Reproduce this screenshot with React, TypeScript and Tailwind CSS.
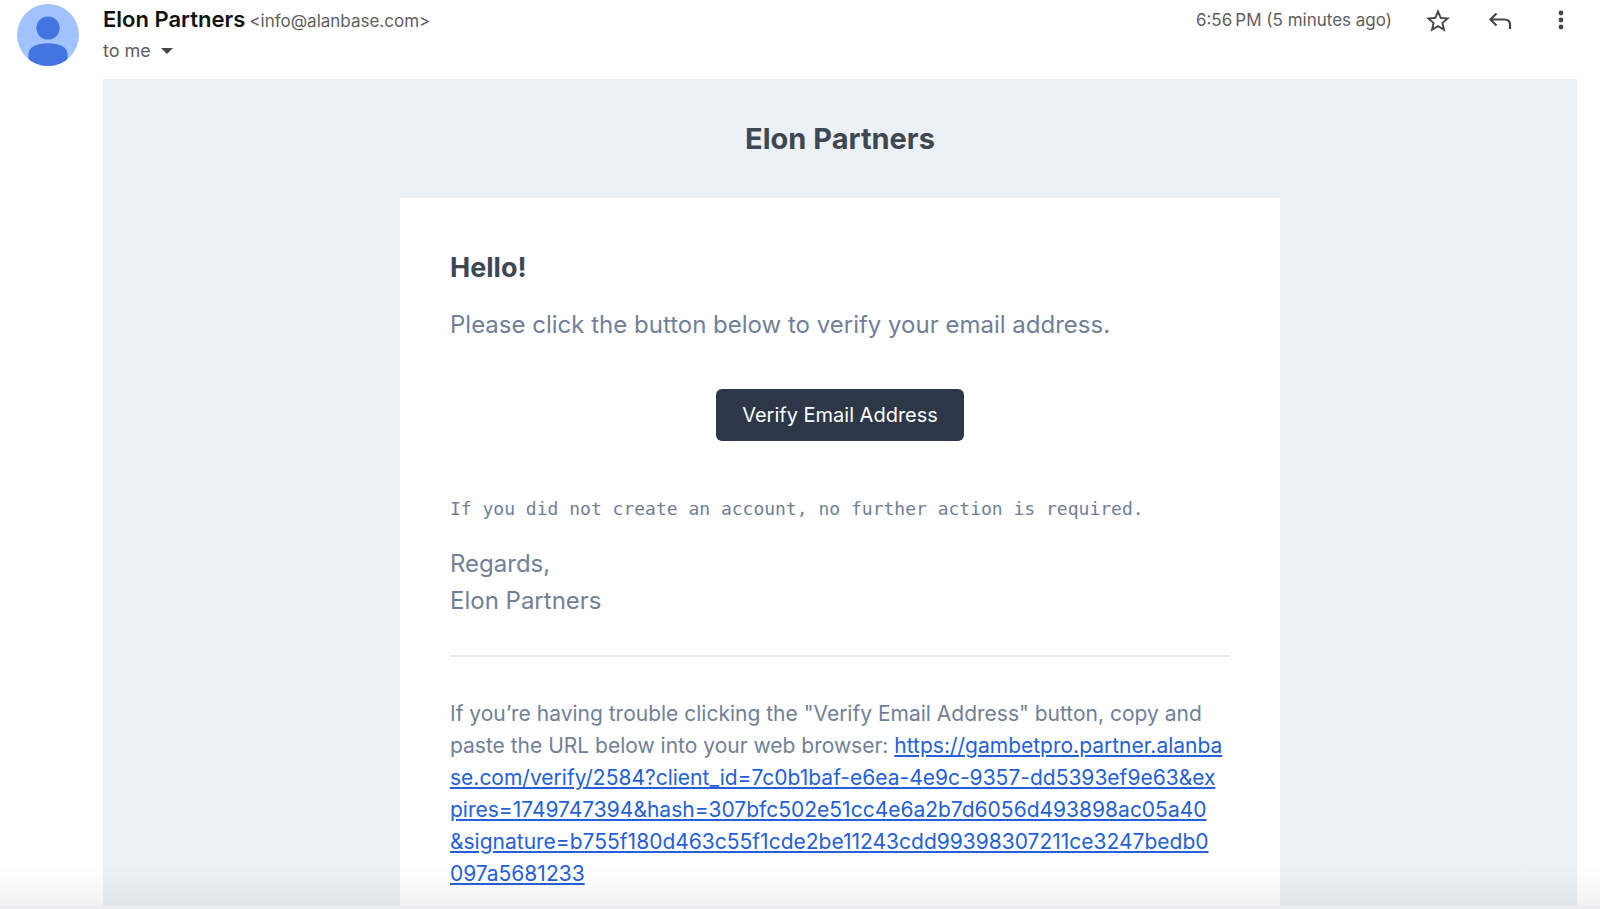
import React from "react";

const urlLines = [
  "se.com/verify/2584?client_id=7c0b1baf-e6ea-4e9c-9357-dd5393ef9e63&ex",
  "pires=1749747394&hash=307bfc502e51cc4e6a2b7d6056d493898ac05a40",
  "&signature=b755f180d463c55f1cde2be11243cdd99398307211ce3247bedb0",
  "097a5681233",
];
const urlStart = "https://gambetpro.partner.alanba";

function Avatar() {
  return (
    <svg viewBox="0 0 62 62" className="size-[62px] shrink-0" role="img" aria-label="Elon Partners">
      <defs>
        <clipPath id="avatar-clip">
          <circle cx="31" cy="31" r="31" />
        </clipPath>
      </defs>
      <g clipPath="url(#avatar-clip)">
        <rect width="62" height="62" fill="#a1c2fd" />
        <circle cx="31" cy="24" r="11.6" fill="#4374e0" />
        <path d="M11.5 62V50.5C11.5 43 20 39.3 31 39.3S50.5 43 50.5 50.5V62Z" fill="#4374e0" />
      </g>
    </svg>
  );
}

function MessageHeader() {
  return (
    <header className="flex h-[79px] shrink-0 items-start pt-1 pl-[17px] pr-5">
      <Avatar />
      <div className="ml-6 min-w-0 grow">
        <div className="flex items-baseline gap-1 leading-[30px]">
          <h2 className="text-[22px] font-semibold text-[#111]">Elon Partners</h2>
          <span className="text-[17px] text-[#5e5e5e]">&lt;info@alanbase.com&gt;</span>
        </div>
        <button type="button" className="flex items-center gap-2.5 text-lg leading-[30px] text-[#5e5e5e]">
          to me
          <svg viewBox="0 0 12 6" className="h-1.5 w-3" fill="#444746" aria-hidden="true">
            <path d="M0 0H12L6 6Z" />
          </svg>
        </button>
      </div>
      <time className="mr-[34px] text-[17px] leading-8 text-[#5e5e5e]">6:56{"\u202f"}PM (5 minutes ago)</time>
      <div className="flex items-center gap-9 pt-[5px] text-[#444746]">
        <button type="button" aria-label="Star">
          <svg viewBox="2 2 20 20" className="size-6" fill="currentColor">
            <path d="M22 9.24l-7.19-.62L12 2 9.19 8.63 2 9.24l5.46 4.73L5.82 21 12 17.27 18.18 21l-1.63-7.03L22 9.24zM12 15.4l-3.76 2.27 1-4.28-3.32-2.88 4.38-.38L12 6.1l1.71 4.04 4.38.38-3.32 2.88 1 4.28L12 15.4z" />
          </svg>
        </button>
        <button type="button" aria-label="Reply">
          <svg viewBox="0 0 28 24" className="h-6 w-7" fill="none" stroke="currentColor" strokeWidth="2.2">
            <path d="M10.500 4.500L4.500 10.500L10.500 16.500M4.500 10.500H18.500C22 10.500 24 12.500 24 15.500V20" />
          </svg>
        </button>
        <button type="button" aria-label="More" className="pr-2.5 pl-0.5">
          <svg viewBox="0 0 18 24" className="h-6 w-[18px]" fill="currentColor">
            <circle cx="9" cy="4" r="2.400" />
            <circle cx="9" cy="11" r="2.400" />
            <circle cx="9" cy="18" r="2.400" />
          </svg>
        </button>
      </div>
    </header>
  );
}

export default function App() {
  return (
    <div className="relative flex h-screen flex-col overflow-hidden border-b-3 border-[#ededf1] bg-white font-['Inter','Liberation_Sans',sans-serif]">
      <MessageHeader />
      <main className="ml-[103px] mr-[23px] grow bg-[#ebf1f5] px-4">
        <h1 className="pt-10 pb-[39px] text-center text-[29px] leading-10 font-bold text-[#3d4852]">Elon Partners</h1>
        <article className="mx-auto max-w-[880px] bg-white p-[50px] text-[#718096]">
          <h2 className="text-[27px] leading-10 font-bold text-[#3d4852]">Hello!</h2>
          <p className="mt-[18px] text-2xl leading-[37px]">Please click the button below to verify your email address.</p>
          <div className="mt-[46px] flex justify-center">
            <a href="#verify" className="rounded-md bg-[#2d3748] px-[26px] text-xl leading-[52px] text-white">Verify Email Address</a>
          </div>
          <p className="mt-14 font-['DejaVu_Sans_Mono',monospace] text-lg leading-6">
            If you did not create an account, no further action is required.
          </p>
          <p className="mt-6 text-2xl leading-[37px]">
            Regards,
            <br />
            Elon Partners
          </p>
          <hr className="mt-9 border-t-2 border-[#e8e9f1]" />
          <p className="mt-[41px] text-[21px] leading-8 whitespace-nowrap">
            If you’re having trouble clicking the "Verify Email Address" button, copy and
            <br />
            paste the URL below into your web browser:{" "}
            <a href="#verify" className="text-[#2460d8] underline">
              {urlStart}
              {urlLines.map((line) => (
                <React.Fragment key={line}>
                  <br />
                  {line}
                </React.Fragment>
              ))}
            </a>
          </p>
        </article>
      </main>
      <div className="pointer-events-none absolute inset-x-0 bottom-0 h-10 bg-linear-to-b from-transparent to-black/5" />
    </div>
  );
}
